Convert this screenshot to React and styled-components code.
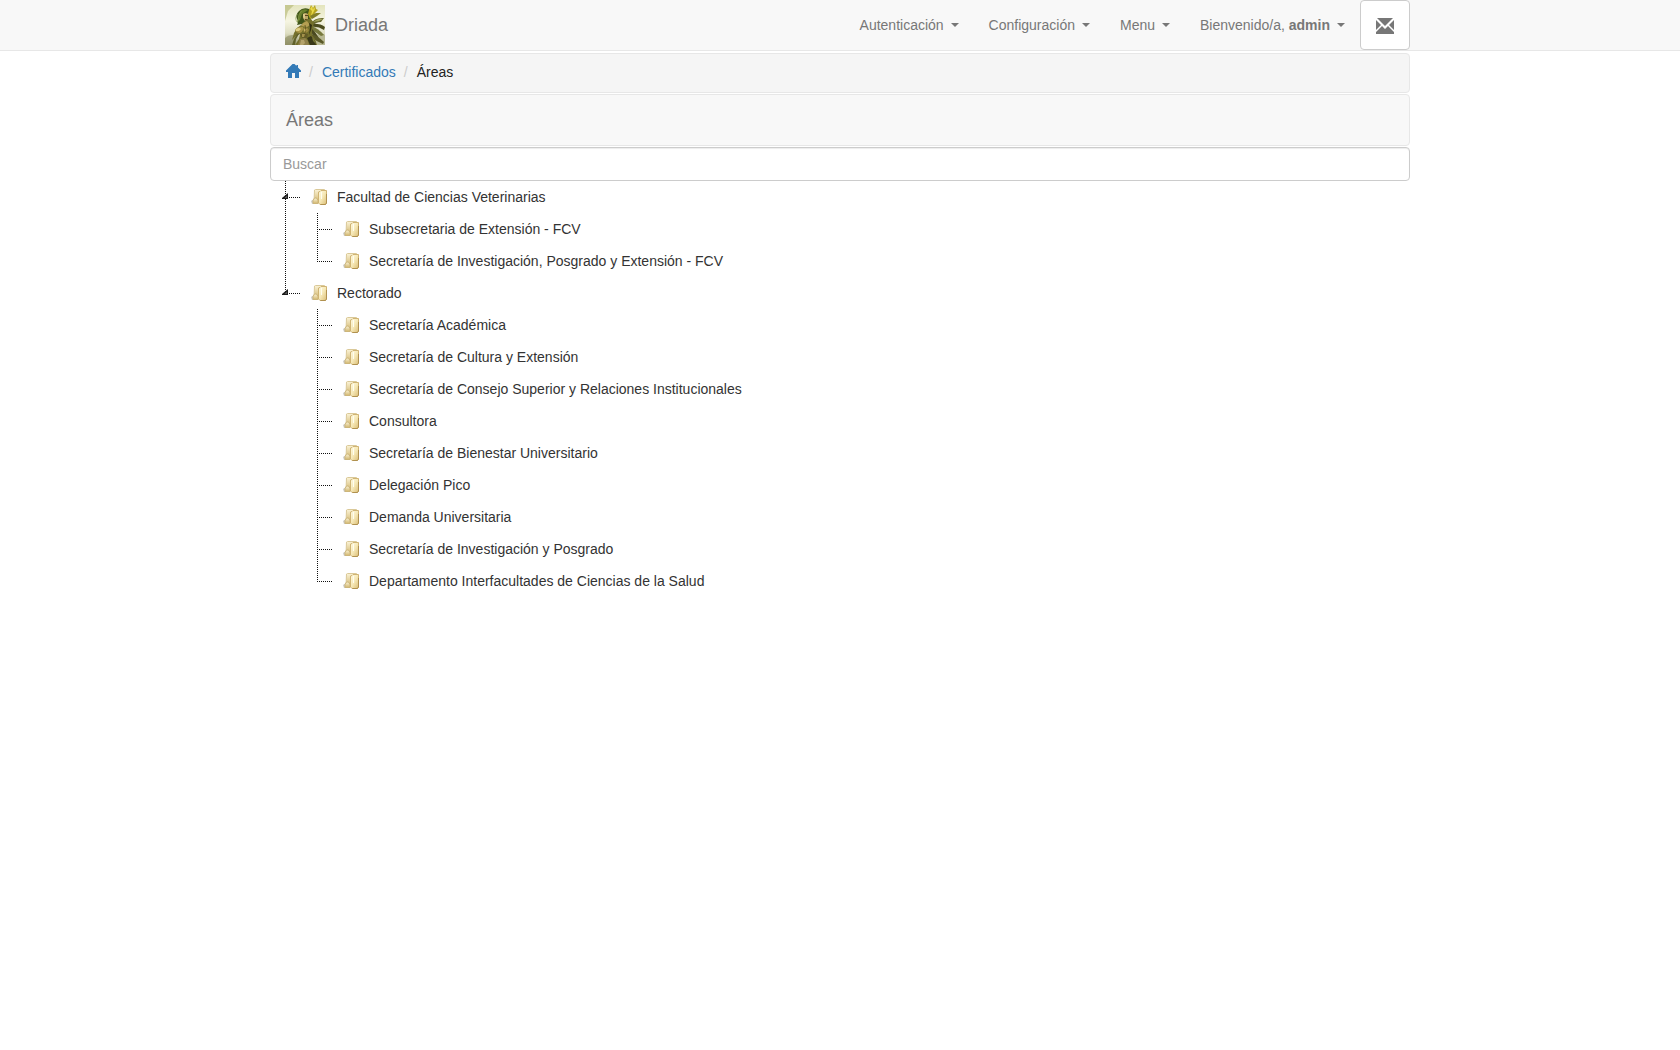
import React, { useState } from "react";
import styled, { createGlobalStyle } from "styled-components";

const GlobalStyle = createGlobalStyle`
  *, *::before, *::after {
    box-sizing: border-box;
  }

  body {
    margin: 0;
    background: #fff;
    color: #333;
    font-family: "Liberation Sans", Arial, sans-serif;
    font-size: 14px;
    line-height: 20px;
  }
`;

const Container = styled.div`
  max-width: 1140px;
  margin: 0 auto;
`;

const Navbar = styled.header`
  margin-bottom: 2px;
  background: #f8f8f8;
  border-bottom: 1px solid #e7e7e7;
`;

const NavbarInner = styled(Container)`
  display: flex;
  align-items: center;
  justify-content: space-between;
  height: 50px;
`;

const Brand = styled.a`
  display: flex;
  align-items: center;
  gap: 10px;
  padding-left: 15px;
  color: #777;
  font-size: 18px;
  text-decoration: none;
`;

const Nav = styled.nav`
  display: flex;
  align-items: center;
`;

const NavButton = styled.button`
  display: flex;
  align-items: center;
  padding: 15px;
  background: none;
  border: 0;
  color: #777;
  font: inherit;
  white-space: pre;
  cursor: pointer;
`;

const Caret = styled.span`
  margin-left: 7px;
  border-top: 4px solid #777;
  border-right: 4px solid transparent;
  border-left: 4px solid transparent;
`;

const MailButton = styled.button`
  display: flex;
  align-items: center;
  justify-content: center;
  width: 50px;
  height: 50px;
  padding: 2px 0 0;
  background: #fff;
  border: 1px solid #ccc;
  border-radius: 4px;
  color: #777;
  cursor: pointer;
`;

const Breadcrumb = styled.nav`
  margin-bottom: 1px;
  padding: 8px 15px 10px;
  background: #f5f5f5;
  border: 1px solid #e7e7e7;
  border-radius: 4px;
`;

const BreadcrumbList = styled.ol`
  display: flex;
  align-items: center;
  margin: 0;
  padding: 0;
  list-style: none;
`;

const BreadcrumbItem = styled.li`
  color: #222;

  & + &::before {
    content: "/";
    padding: 0 9px 0 8px;
    color: #ccc;
  }
`;

const BreadcrumbLink = styled.a`
  color: #337ab7;
  text-decoration: none;

  svg {
    display: block;
    margin-bottom: 2px;
  }
`;

const Heading = styled.h1`
  margin: 0 0 1px;
  padding: 15px;
  background: #f8f8f8;
  border: 1px solid #e7e7e7;
  border-radius: 4px;
  color: #777;
  font-size: 18px;
  font-weight: normal;
  line-height: 20px;
`;

const SearchInput = styled.input`
  display: block;
  width: 100%;
  height: 34px;
  padding: 6px 12px;
  border: 1px solid #ccc;
  border-radius: 4px;
  box-shadow: inset 0 1px 1px rgba(0, 0, 0, 0.075);
  color: #555;
  font: inherit;

  &::placeholder {
    color: #999;
  }
`;

const dotsDown = "repeating-linear-gradient(to bottom, #111 0 1px, transparent 1px 2px)";
const dotsAcross = "repeating-linear-gradient(to right, #111 0 1px, transparent 1px 2px)";

const TreeList = styled.ul`
  margin: 0;
  padding: 0 0 0 15px;
  list-style: none;
`;

const Branch = styled.ul`
  margin: 0;
  padding: 0 0 0 32px;
  background: ${({ $trunk }) => ($trunk ? `${dotsDown} 0 0 / 1px 100% no-repeat` : "none")};
  list-style: none;
`;

const NodeRow = styled.div`
  display: flex;
  align-items: center;
  height: 32px;
`;

const Connector = styled.span`
  flex: none;
  width: 26px;
  height: 32px;
  background:
    ${dotsDown} 0 0 / 1px ${({ $last }) => ($last ? "17px" : "100%")} no-repeat,
    ${dotsAcross} 0 16px / 15px 1px no-repeat;
`;

const Toggle = styled.button`
  display: flex;
  align-items: center;
  width: 6px;
  height: 32px;
  margin-left: -3px;
  padding: 0 0 2px;
  background: none;
  border: 0;
  cursor: pointer;
`;

const NodeLink = styled.a`
  display: flex;
  align-items: center;
  gap: 10px;
  color: #333;
  text-decoration: none;
`;

const DriadaPicture = () => (
  <svg width="40" height="40" viewBox="0 0 40 40" aria-hidden="true">
    <defs>
      <linearGradient id="sky" x1="0" y1="0" x2="0" y2="1">
        <stop offset="0" stopColor="#e3e4bd" />
        <stop offset="0.4" stopColor="#f6f5e2" />
        <stop offset="0.7" stopColor="#dfdfc4" />
        <stop offset="1" stopColor="#9a9a72" />
      </linearGradient>
    </defs>
    <rect width="40" height="40" fill="url(#sky)" />
    <path d="M0 0H9L3 6L0 16Z" fill="#b2b573" opacity=".6" />
    <path d="M0 33Q5 28 12 31L10 40H0Z" fill="#8b8a60" opacity=".6" />
    <path d="M30 31Q36 27 40 30V40H28Z" fill="#b9b994" />
    <path d="M25 19Q30 12 39 13L36 17Q31 17 27 21Z" fill="#66682f" />
    <path d="M28 17Q33 13 38 14L34 16Z" fill="#a6a75e" />
    <path d="M26 19Q35 18 40 22L39 25Q33 21 26 22Z" fill="#4c4c1f" />
    <path d="M26 21Q33 23 39 30L36 31Q30 27 26 24Z" fill="#77793d" />
    <path d="M26 23Q32 28 35 36L32 35Q28 30 25 26Z" fill="#4a491f" />
    <path d="M27 29Q33 31 39 37L38 39Q31 36 27 33Z" fill="#5a5928" />
    <path d="M14 6Q18 2 24 4L28 9L26 14L24 17L20 18L17 19L12 20Q14 16 12 14Q10 10 14 6Z" fill="#40551a" />
    <path d="M15 6Q19 3 23 5L20 7L17 9L15 15L12 18L13 13Z" fill="#69802c" />
    <path d="M13 9Q9 13 12 17M17 6Q12 10 14 15" fill="none" stroke="#87994b" strokeWidth=".6" />
    <path d="M24 5L26 0L28 3L30 0L31 4L33 5L30 8L29 12L25 14L23 9Z" fill="#b5a31f" />
    <path d="M27 1L28 5L29 2L30 4L28 8L26 11L27 6L25 4Z" fill="#ead947" />
    <path d="M25 11L31 8L36 8L32 11L27 14Z" fill="#817d28" />
    <path d="M18 9Q20 7 23 9L23 14L20 16L18 13Z" fill="#bda866" />
    <path d="M18 9L20 9L20 14L18 12Z" fill="#dbc887" />
    <path d="M20 10H23V11H20ZM20 14H22V15H20Z" fill="#5b421d" />
    <path d="M22 14L26 14L29 18L27 25L27 30L30 34L32 40H10L14 34L15 29L11 31L7 35L9 28L12 23L16 20Z" fill="#74702c" />
    <path d="M18 18L22 16L25 20L22 22L16 21Z" fill="#b49f52" />
    <path d="M10 25Q13 21 18 22Q19 26 15 28Q11 28 10 25Z" fill="#a99546" />
    <path d="M11 24Q14 22 16 24L14 26L11 26Z" fill="#dfcf82" />
    <path d="M18 23Q22 21 24 25Q23 28 19 28Z" fill="#9c8a3e" />
    <path d="M19 24L22 24L21 27L19 26Z" fill="#c7b363" />
    <path d="M24 18L27 20L26 25L24 30L25 23Z" fill="#302e11" />
    <path d="M15 29L19 28L23 29L22 33L17 33Z" fill="#635b27" />
    <path d="M17 29L20 29L19 32L17 32Z" fill="#a3914a" />
    <path d="M15 34L20 33L23 36L24 40H13Z" fill="#90814b" />
    <path d="M16 35L19 35L20 38L18 40H15Z" fill="#b4a36b" />
    <path d="M22 33L26 31L30 36L31 40H25Z" fill="#393818" />
    <path d="M27 32L29 34L31 39L28 36Z" fill="#777736" />
    <path d="M12 29L14 29L11 34L10 40H7L9 34Z" fill="#5f602a" />
    <path d="M20 20L21 26L19 29" fill="none" stroke="#504815" strokeWidth=".7" />
  </svg>
);

const MailIcon = () => (
  <svg width="18" height="16" viewBox="0 0 18 16" fill="currentColor" aria-hidden="true">
    <path d="M1 0H17L9 8Z" />
    <path d="M0 2L5 7L0 12Z" />
    <path d="M18 2L13 7L18 12Z" />
    <path d="M0 14L6 8L9 11L12 8L18 14V16H0Z" />
  </svg>
);

const HomeIcon = () => (
  <svg width="15" height="14" viewBox="0 0 15 14" fill="currentColor" aria-hidden="true">
    <path d="M6.5 0H8.5L10.5 2V1H12V3.5L15 6.5V8H13V14H9V9H6V14H2V8H0V6.5Z" />
  </svg>
);

const ArrowIcon = () => (
  <svg width="6" height="6" viewBox="0 0 6 6" aria-hidden="true">
    <path d="M6 0V6H0V5Z" fill="#1c1c1c" />
    <path d="M5 2.5V5H2.5Z" fill="#595959" />
  </svg>
);

const FolderIcon = () => (
  <svg width="16" height="16" viewBox="0 0 16 16" aria-hidden="true">
    <defs>
      <linearGradient id="front" x1="0" y1="0" x2="1" y2="1">
        <stop offset="0" stopColor="#fffbe4" />
        <stop offset="0.5" stopColor="#f6e8b6" />
        <stop offset="1" stopColor="#dabd76" />
      </linearGradient>
      <linearGradient id="back" x1="0" y1="0" x2="0" y2="1">
        <stop offset="0" stopColor="#fbf3d6" />
        <stop offset="1" stopColor="#d2b76f" />
      </linearGradient>
    </defs>
    <path d="M0 12L3 10V15H1Z" fill="#999" opacity=".5" />
    <path d="M3.5 1L4.5 0.5H13.5V13H3Z" fill="url(#back)" stroke="#dac999" />
    <path d="M2 14.5V11.5L3.5 9H5.5L7 11.5V14.5Z" fill="url(#back)" stroke="#cdb67a" />
    <path d="M7.5 3L9 2.5L10 1.5H15.5V14L14.5 15.5H9L7.5 14Z" fill="url(#front)" stroke="#d0b474" />
    <path d="M10.5 3V10" stroke="#fffdf0" />
    <path d="M15.5 5V14L14.5 15.5H9.5" fill="none" stroke="#b09150" />
  </svg>
);

const menus = ["Autenticación", "Configuración", "Menu"];

const areas = [
  {
    name: "Facultad de Ciencias Veterinarias",
    children: [
      "Subsecretaria de Extensión - FCV",
      "Secretaría de Investigación, Posgrado y Extensión - FCV",
    ],
  },
  {
    name: "Rectorado",
    children: [
      "Secretaría Académica",
      "Secretaría de Cultura y Extensión",
      "Secretaría de Consejo Superior y Relaciones Institucionales",
      "Consultora",
      "Secretaría de Bienestar Universitario",
      "Delegación Pico",
      "Demanda Universitaria",
      "Secretaría de Investigación y Posgrado",
      "Departamento Interfacultades de Ciencias de la Salud",
    ],
  },
];

const TreeLabel = ({ name }) => (
  <NodeLink href="#">
    <FolderIcon />
    {name}
  </NodeLink>
);

const Area = ({ area, last }) => {
  const [open, setOpen] = useState(true);

  return (
    <li>
      <NodeRow>
        <Connector $last={last}>
          <Toggle aria-label={area.name} aria-expanded={open} onClick={() => setOpen(!open)}>
            <ArrowIcon />
          </Toggle>
        </Connector>
        <TreeLabel name={area.name} />
      </NodeRow>
      {open && (
        <Branch $trunk={!last}>
          {area.children.map((name, index) => (
            <li key={name}>
              <NodeRow>
                <Connector $last={index === area.children.length - 1} />
                <TreeLabel name={name} />
              </NodeRow>
            </li>
          ))}
        </Branch>
      )}
    </li>
  );
};

const App = () => {
  const [search, setSearch] = useState("");

  return (
    <>
      <GlobalStyle />
      <Navbar>
        <NavbarInner>
          <Brand href="#">
            <DriadaPicture />
            Driada
          </Brand>
          <Nav>
            {menus.map((menu) => (
              <NavButton key={menu}>
                {menu}
                <Caret />
              </NavButton>
            ))}
            <NavButton>
              Bienvenido/a, <strong>admin</strong>
              <Caret />
            </NavButton>
            <MailButton aria-label="Mensajes">
              <MailIcon />
            </MailButton>
          </Nav>
        </NavbarInner>
      </Navbar>
      <Container as="main">
        <Breadcrumb>
          <BreadcrumbList>
            <BreadcrumbItem>
              <BreadcrumbLink href="#" aria-label="Inicio">
                <HomeIcon />
              </BreadcrumbLink>
            </BreadcrumbItem>
            <BreadcrumbItem>
              <BreadcrumbLink href="#">Certificados</BreadcrumbLink>
            </BreadcrumbItem>
            <BreadcrumbItem>Áreas</BreadcrumbItem>
          </BreadcrumbList>
        </Breadcrumb>
        <Heading>Áreas</Heading>
        <SearchInput
          type="text"
          aria-label="Buscar"
          placeholder="Buscar"
          value={search}
          onChange={(e) => setSearch(e.target.value)}
        />
        <TreeList>
          {areas.map((area, index) => (
            <Area key={area.name} area={area} last={index === areas.length - 1} />
          ))}
        </TreeList>
      </Container>
    </>
  );
};

export default App;
